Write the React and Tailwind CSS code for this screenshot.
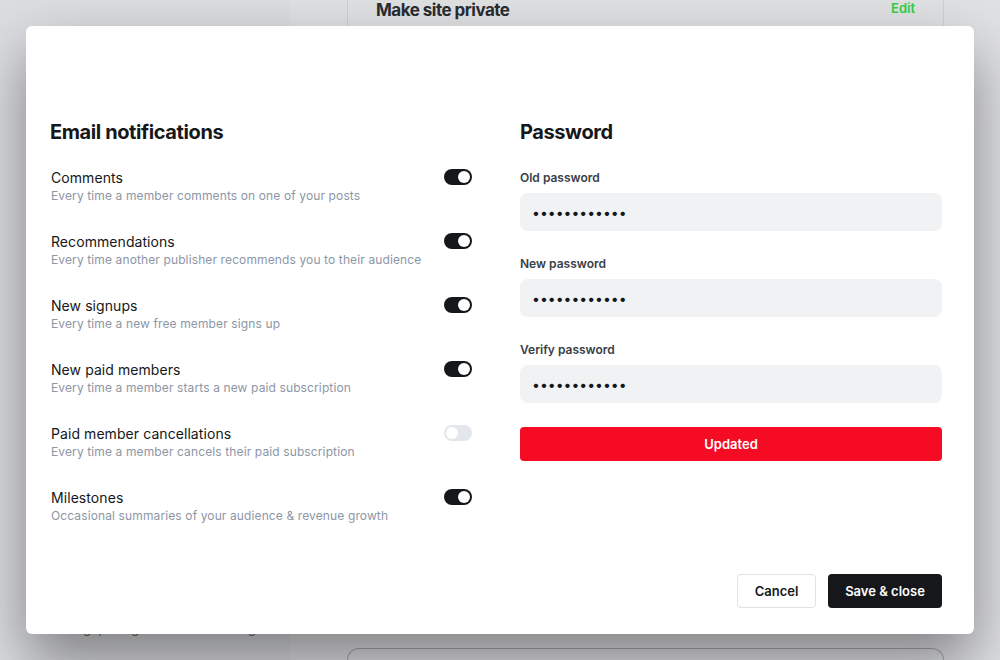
import React from "react";

const rows = [
  { t: "Comments", d: "Every time a member comments on one of your posts", on: true },
  { t: "Recommendations", d: "Every time another publisher recommends you to their audience", on: true },
  { t: "New signups", d: "Every time a new free member signs up", on: true },
  { t: "New paid members", d: "Every time a member starts a new paid subscription", on: true },
  { t: "Paid member cancellations", d: "Every time a member cancels their paid subscription", on: false },
  { t: "Milestones", d: "Occasional summaries of your audience & revenue growth", on: true },
];

function Toggle({ on }) {
  return (
    <div
      className={
        "relative h-[16px] w-[28px] shrink-0 rounded-full " +
        (on ? "bg-[#15171a]" : "bg-[#e3e6ea]")
      }
    >
      <div
        className={
          "absolute top-[2px] h-[12px] w-[12px] rounded-full bg-white " +
          (on ? "left-[14px]" : "left-[2px]")
        }
      />
    </div>
  );
}

function Field({ label }) {
  return (
    <div className="flex flex-col">
      <label className="text-[12px] leading-4 font-semibold text-[#394047]">{label}</label>
      <input
        type="password"
        readOnly
        value="passwordpass"
        className="mt-[7px] h-[38px] w-full rounded-lg bg-[#f1f2f4] px-3 text-[14px] text-[#15171a] outline-none"
        style={{ fontFamily: "Inter, sans-serif" }}
      />
    </div>
  );
}

export default function App() {
  return (
    <div
      className="relative h-[660px] w-[1000px] overflow-hidden flex"
      style={{ fontFamily: "Inter, 'Noto Sans', sans-serif" }}
    >
      {/* background page */}
      <div className="w-[290px] shrink-0 bg-[#dcdde0] flex flex-col justify-end pb-[22px] pl-[45px]">
        <div className="text-[14px] leading-5 text-[#6f7175]">Settings, integrations and billing</div>
      </div>
      <div className="flex-1 bg-[#e0e1e3] flex flex-col justify-between pl-[57px] pr-[56px]">
        <div className="h-[40px] border-x border-[#cfd0d3] flex items-start justify-between pl-[28px] pr-[28px]">
          <div className="text-[17px] leading-[21px] font-bold tracking-[-0.03em] text-[#2a2c30]">Make site private</div>
          <div className="text-[13px] leading-[17px] font-semibold text-[#30cf43]">Edit</div>
        </div>
        <div className="h-[12px] rounded-t-xl border-x border-t border-[#a6a8ac]" />
      </div>

      {/* modal */}
      <div className="absolute left-[26px] top-[26px] h-[608px] w-[948px] rounded-md bg-white shadow-[0_28px_60px_rgba(0,0,0,0.42)] flex flex-col pl-6 pr-8 pt-[92px] pb-[26px]">
        <div className="flex gap-12">
          <div className="w-[422px] flex flex-col">
            <h2 className="text-[20px] leading-7 font-bold text-[#15171a] tracking-[-0.02em]">Email notifications</h2>
            <div className="mt-[22px] flex flex-col gap-[28px]">
              {rows.map((r) => (
                <div key={r.t} className="flex items-start justify-between">
                  <div className="flex flex-col pl-[1px]">
                    <div className="text-[14px] leading-5 text-[#15171a] tracking-[0.005em]">{r.t}</div>
                    <div className="mt-0 text-[12px] leading-4 text-[#8c96a6] tracking-[0.01em]">{r.d}</div>
                  </div>
                  <div className="pt-[1px]">
                    <Toggle on={r.on} />
                  </div>
                </div>
              ))}
            </div>
          </div>
          <div className="w-[422px] flex flex-col">
            <h2 className="text-[20px] leading-7 font-bold text-[#15171a] tracking-[-0.02em]">Password</h2>
            <div className="mt-[24px] flex flex-col gap-[25px]">
              <Field label="Old password" />
              <Field label="New password" />
              <Field label="Verify password" />
            </div>
            <button className="mt-[24px] h-[34px] w-full rounded bg-[#f50b24] pt-[2px] text-[13px] font-semibold text-white">
              Updated
            </button>
          </div>
        </div>
        <div className="mt-auto flex justify-end gap-3">
          <button className="h-[34px] w-[79px] rounded border border-[#dfe1e5] bg-white pt-[2px] text-[13px] font-semibold text-[#15171a]">
            Cancel
          </button>
          <button className="h-[34px] w-[114px] rounded bg-[#15171a] pt-[2px] text-[13px] font-semibold text-white">
            Save &amp; close
          </button>
        </div>
      </div>
    </div>
  );
}
